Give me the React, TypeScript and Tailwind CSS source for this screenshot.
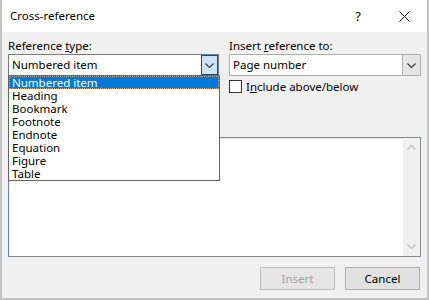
import { useState } from "react";

const types = [
  "Numbered item",
  "Heading",
  "Bookmark",
  "Footnote",
  "Endnote",
  "Equation",
  "Figure",
  "Table",
];

function Chevron({ down = true, color = "#404040" }: { down?: boolean; color?: string }) {
  return (
    <svg width="9" height="5" viewBox="0 0 9 5" className="block">
      <path
        d={down ? "M0.5 0.5 L4.5 4.5 L8.5 0.5" : "M0.5 4.5 L4.5 0.5 L8.5 4.5"}
        fill="none"
        stroke={color}
        strokeWidth="1.2"
      />
    </svg>
  );
}

export default function App() {
  const [selected] = useState(0);

  return (
    <div
      className="relative w-[429px] h-[300px] flex flex-col bg-[#f0f0f0] border-x-2 border-b-2 border-[#c3c3c3] text-[11.5px] text-black overflow-hidden"
      style={{ fontFamily: '"Noto Sans", "Open Sans", sans-serif' }}
    >
      {/* title bar */}
      <div className="h-[32px] shrink-0 bg-white flex items-center pl-[8px]">
        <span className="flex-1 text-[11.5px] leading-none">Cross-reference</span>
        <span className="w-[46px] text-center text-[13px] leading-none">?</span>
        <span className="w-[46px] h-[32px] flex items-center justify-center">
          <svg width="11" height="11" viewBox="0 0 11 11">
            <path d="M0.5 0.5 L10.5 10.5 M10.5 0.5 L0.5 10.5" stroke="#111" strokeWidth="1" />
          </svg>
        </span>
      </div>

      {/* body */}
      <div className="flex-1 flex flex-col px-[6px] pt-[6px]">
        <div className="flex gap-[10px]">
          <div className="w-[211px]">
            <div className="leading-[16px]">
              Reference <span className="underline">t</span>ype:
            </div>
            <div className="h-[22px] flex items-center bg-white border border-[#7a7a7a]">
              <span className="flex-1 pl-[3px] leading-none">Numbered item</span>
              <span className="w-[17px] h-[20px] flex items-center justify-center bg-[#cce4f7] border border-[#005499]">
                <Chevron />
              </span>
            </div>
          </div>
          <div className="w-[192px]">
            <div className="leading-[16px]">
              Insert <span className="underline">r</span>eference to:
            </div>
            <div className="h-[22px] flex items-center bg-white border border-[#adadad]">
              <span className="flex-1 pl-[3px] leading-none">Page number</span>
              <span className="w-[18px] h-[20px] flex items-center justify-center bg-[#e5e5e5] border-l border-[#adadad]">
                <Chevron />
              </span>
            </div>
            <label className="mt-[4px] flex items-center gap-[4px] leading-[13px]">
              <span className="w-[13px] h-[13px] bg-white border border-[#333]" />
              <span>
                I<span className="underline">n</span>clude above/below
              </span>
            </label>
          </div>
        </div>

        {/* item list */}
        <div className="mt-[44px] h-[120px] flex bg-white border border-[#828790]">
          <div className="flex-1 border-l border-t border-[#e3e3e3]" />
          <div className="w-[17px] bg-[#f0f0f0] flex flex-col items-center justify-between py-[7px]">
            <Chevron down={false} color="#c0c0c0" />
            <Chevron color="#c0c0c0" />
          </div>
        </div>

        <div className="mt-[10px] flex justify-end gap-[10px] pr-[1px]">
          <button className="w-[75px] h-[23px] bg-[#e6e6e6] border border-[#bfbfbf] text-[#a0a0a0] leading-none">
            Insert
          </button>
          <button className="w-[75px] h-[23px] bg-[#e1e1e1] border border-[#adadad] leading-none">
            Cancel
          </button>
        </div>
      </div>

      {/* open dropdown list */}
      <div className="absolute left-[6px] top-[75px] w-[212px] h-[106px] bg-white border border-[#646464] flex flex-col">
        {types.map((t, i) => (
          <div
            key={t}
            className={
              i === selected
                ? "h-[13px] pl-[3px] leading-[13px] bg-[#0078d7] text-white outline outline-1 outline-dotted outline-[#f59a3c] -outline-offset-1"
                : "h-[13px] pl-[3px] leading-[13px]"
            }
          >
            {t}
          </div>
        ))}
      </div>
    </div>
  );
}
